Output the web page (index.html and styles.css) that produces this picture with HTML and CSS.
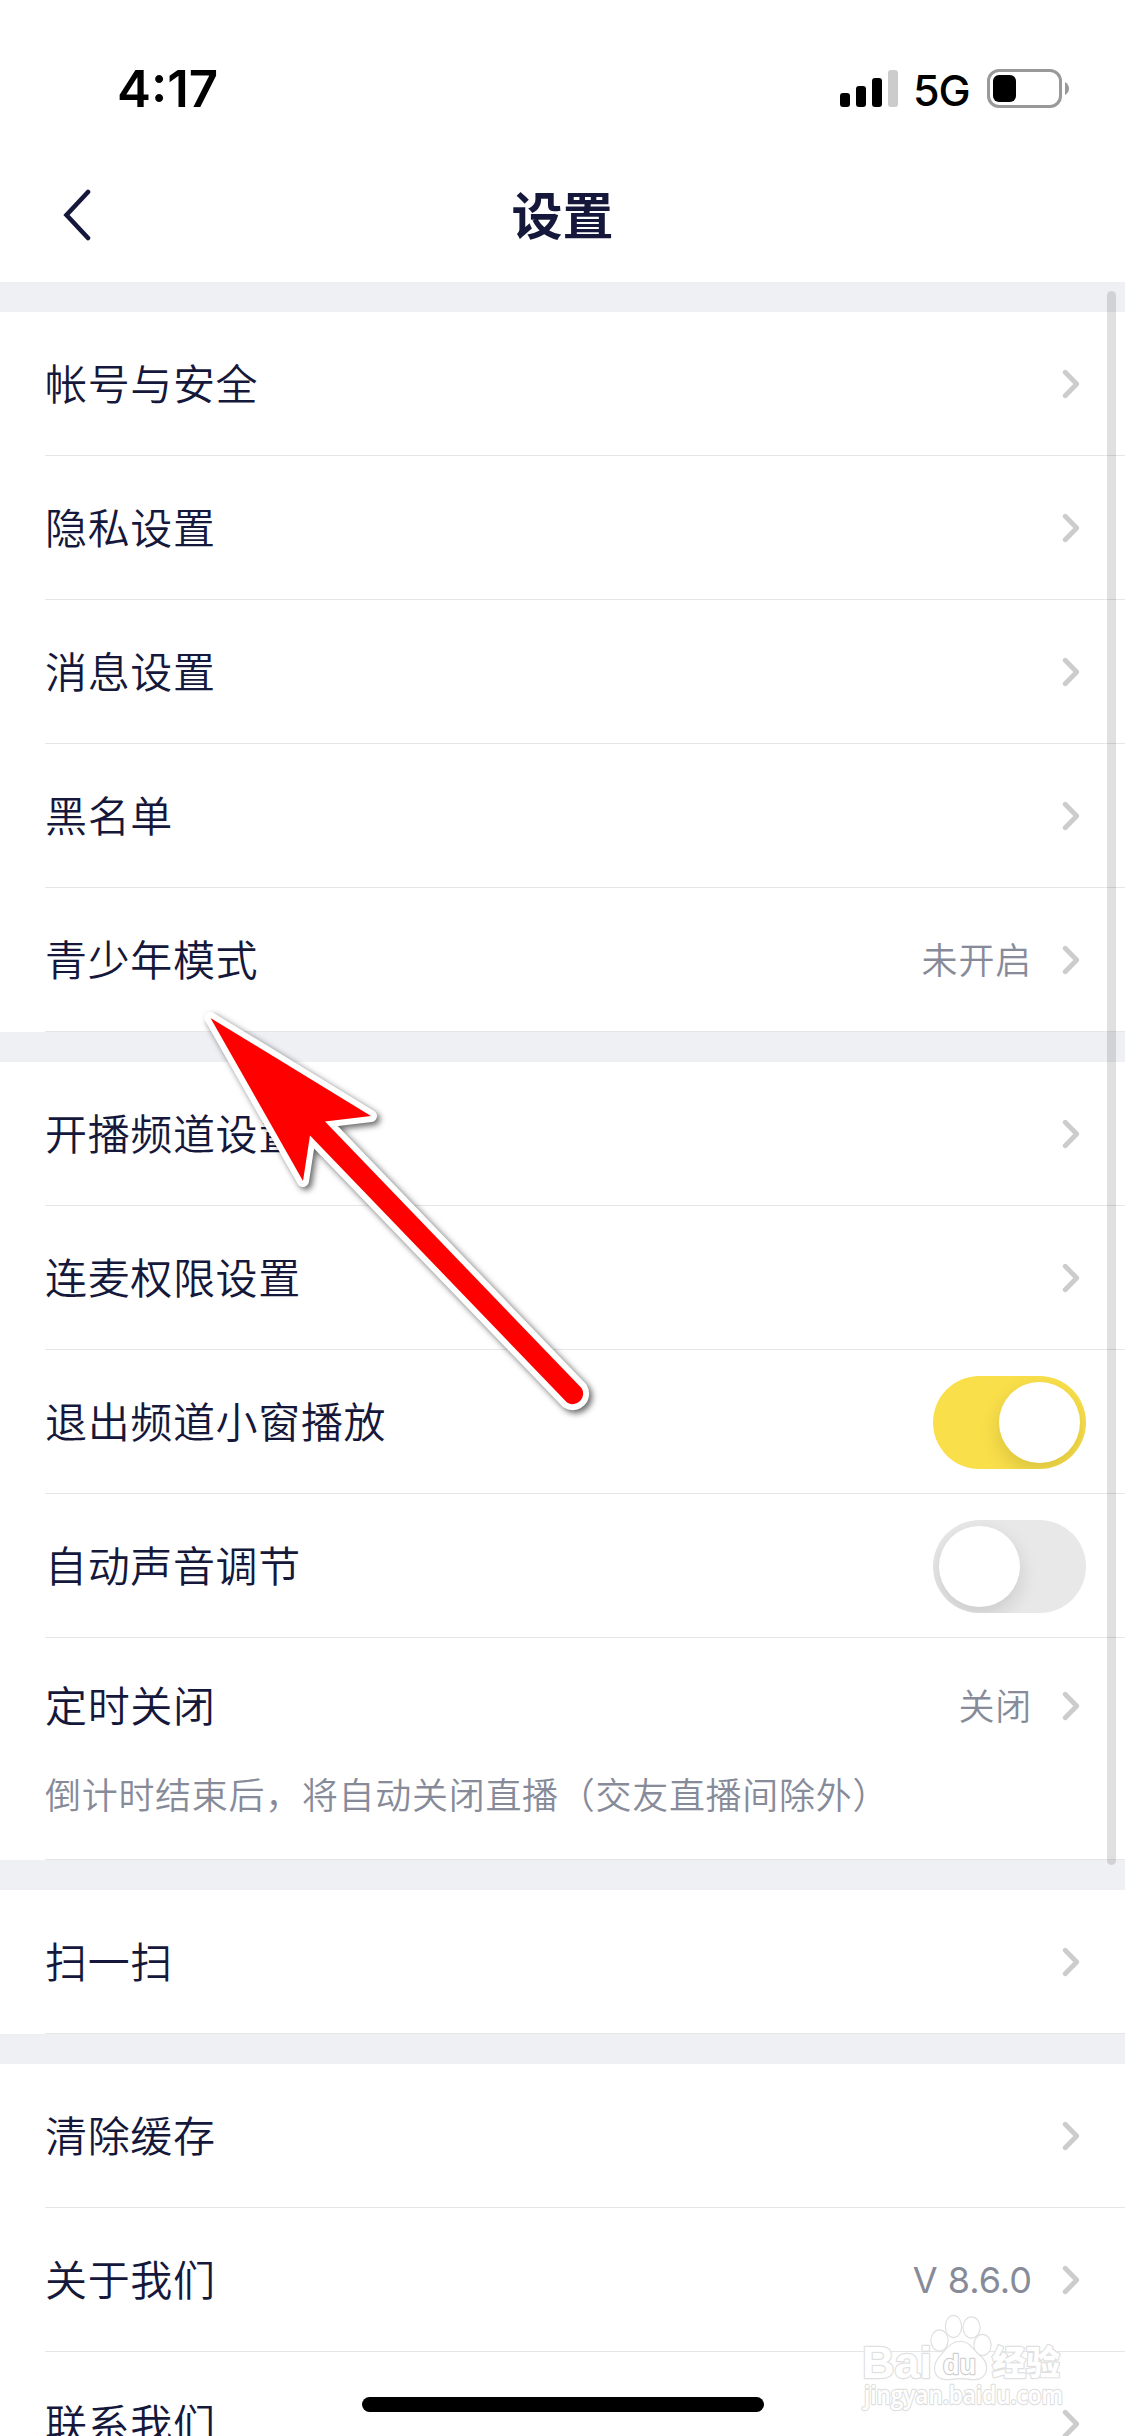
FILE: index.html
```html
<!DOCTYPE html>
<html lang="zh-CN">
<head>
<meta charset="utf-8">
<title>设置</title>
<link rel="stylesheet" href="styles.css">
</head>
<body>
<svg class="defs" aria-hidden="true">
  <symbol id="chevron" viewBox="0 0 18 30"><path d="M3.200 3.200 14.700 15 3.200 26.800" fill="none" stroke="#ccc" stroke-width="4.800" stroke-linecap="round" stroke-linejoin="round"/></symbol>
</svg>
<div class="screen">
  <header class="status">
    <span class="time">4:17</span>
    <span class="indicators">
      <svg class="signal" viewBox="0 0 58 37"><rect y="23" width="10" height="14" rx="3"/><rect x="16" y="16" width="10" height="21" rx="3"/><rect x="32" y="8" width="10" height="29" rx="3"/><rect x="48" width="10" height="37" rx="3" fill="#ccc"/></svg>
      <span class="network">5G</span>
      <svg class="battery" viewBox="0 0 82 39"><rect x="1.500" y="1.500" width="72" height="36" rx="10.500" fill="none" stroke="#999" stroke-width="3"/><rect x="6" y="6" width="23" height="27" rx="6"/><path d="M78 13q4 2.500 4 6.500t-4 6.500z" fill="#999"/></svg>
    </span>
  </header>
  <nav class="titlebar">
    <svg class="back" viewBox="0 0 30 52"><path d="M26 3 4.500 26 26 49" fill="none" stroke="#15183a" stroke-width="4.600" stroke-linecap="round" stroke-linejoin="miter"/></svg>
    <h1>设置</h1>
  </nav>
  <main>
    <section class="group">
      <div class="row"><span class="label">帐号与安全</span><svg class="chev"><use href="#chevron"/></svg></div>
      <div class="row"><span class="label">隐私设置</span><svg class="chev"><use href="#chevron"/></svg></div>
      <div class="row"><span class="label">消息设置</span><svg class="chev"><use href="#chevron"/></svg></div>
      <div class="row"><span class="label">黑名单</span><svg class="chev"><use href="#chevron"/></svg></div>
      <div class="row"><span class="label">青少年模式</span><span class="value">未开启</span><svg class="chev"><use href="#chevron"/></svg></div>
    </section>
    <section class="group">
      <div class="row"><span class="label">开播频道设置</span><svg class="chev"><use href="#chevron"/></svg></div>
      <div class="row"><span class="label">连麦权限设置</span><svg class="chev"><use href="#chevron"/></svg></div>
      <div class="row has-toggle"><span class="label">退出频道小窗播放</span><span class="toggle on"><i class="knob"></i></span></div>
      <div class="row has-toggle"><span class="label">自动声音调节</span><span class="toggle"><i class="knob"></i></span></div>
      <div class="row timer">
        <div class="line"><span class="label">定时关闭</span><span class="value">关闭</span><svg class="chev"><use href="#chevron"/></svg></div>
        <p class="note">倒计时结束后，将自动关闭直播（交友直播间除外）</p>
      </div>
    </section>
    <section class="group">
      <div class="row"><span class="label">扫一扫</span><svg class="chev"><use href="#chevron"/></svg></div>
    </section>
    <section class="group">
      <div class="row"><span class="label">清除缓存</span><svg class="chev"><use href="#chevron"/></svg></div>
      <div class="row"><span class="label">关于我们</span><span class="value version">V 8.6.0</span><svg class="chev"><use href="#chevron"/></svg></div>
      <div class="row"><span class="label">联系我们</span><svg class="chev"><use href="#chevron"/></svg></div>
    </section>
  </main>

  <div class="scrollbar"></div>
  <div class="home"></div>

  <svg class="arrow" viewBox="180 990 430 440">
    <path d="M210.500 1018 371 1116 325 1121.500 581.500 1388A10.500 10.500 0 0 1 567 1402.500L310 1135.500 303 1181Z" fill="#f00" stroke="#fff" stroke-width="12" stroke-linejoin="round" paint-order="stroke"/>
  </svg>

  <svg class="watermark" viewBox="850 2300 230 136">
    <g fill="#fff" stroke="#e0e0e0" stroke-width="2.400" stroke-linejoin="round" paint-order="stroke">
      <text class="wm-latin" x="862" y="2378" font-size="45" textLength="70" lengthAdjust="spacingAndGlyphs">Bai</text>
      <ellipse cx="939.500" cy="2340.500" rx="8" ry="10"/>
      <ellipse cx="953.500" cy="2326.500" rx="7.500" ry="10.500"/>
      <ellipse cx="971.500" cy="2327.500" rx="8" ry="10"/>
      <ellipse cx="982.500" cy="2345" rx="8" ry="10"/>
      <path d="M960.500 2342c9 0 12 8 18 13 12 9 9 24-4 24-6 0-9-1-14-1s-8 1-14 1c-13 0-15-14-5-24 6-6 9-13 19-13z"/>
      <text class="wm-latin" x="943" y="2373.500" font-size="28" textLength="33" lengthAdjust="spacingAndGlyphs" stroke="#d0d0d0">du</text>
      <text class="wm-cjk" x="992" y="2375" font-size="34">经验</text>
      <text class="wm-url" x="864" y="2404" font-size="25" textLength="199" lengthAdjust="spacingAndGlyphs">jingyan.baidu.com</text>
    </g>
  </svg>
</div>
</body>
</html>
```
FILE: styles.css
```css
* { box-sizing: border-box; }
body { margin: 0; background: #fff; }
.defs { display: none; }

.screen {
  position: relative;
  width: 1125px;
  height: 2436px;
  overflow: hidden;
  background: #fff;
  color: #15183a;
  font-family: "Noto Sans CJK SC", sans-serif;
  font-weight: 350;
}

.status {
  display: flex;
  justify-content: space-between;
  height: 150px;
  padding: 69px 56px 0 117px;
  color: #000;
  font-family: Inter, sans-serif;
}
.time { font-size: 51px; line-height: 40px; font-weight: 600; }
.indicators { display: flex; align-items: flex-start; }
.signal { width: 58px; height: 37px; margin-top: 1px; }
.network { width: 74px; margin-left: 15px; font-size: 43px; line-height: 43px; font-weight: 450; letter-spacing: -1px; }
.battery { width: 82px; height: 39px; }

.titlebar {
  display: grid;
  grid-template-columns: 110px 1fr 110px;
  align-items: center;
  height: 132px;
  padding-bottom: 2px;
}
.back { width: 30px; height: 52px; margin-left: 62px; }
h1 { margin: 0; padding-bottom: 5px; font-size: 51px; line-height: 72px; font-weight: 600; text-align: center; }

.group { border-top: 30px solid #eff0f4; }
.row {
  display: flex;
  align-items: center;
  height: 144px;
  padding-right: 45px;
  margin-left: 45px;
  box-shadow: inset 0 -1px #e6e6e6;
}
.row.has-toggle { padding-right: 39px; }
.label { flex: 1; padding-bottom: 4px; font-size: 42px; line-height: 60px; letter-spacing: .65px; }
.value { padding-bottom: 4px; font-size: 36px; line-height: 52px; letter-spacing: .8px; color: #878b99; }
.version { padding-bottom: 0; font-family: Inter, sans-serif; font-weight: 400; letter-spacing: 0; }
.chev { width: 18px; height: 30px; margin-left: 30px; }

.timer { display: block; height: 222px; padding-top: 38px; }
.line { display: flex; align-items: center; height: 60px; }
.note { margin: 31px 0 0; font-size: 36px; line-height: 52px; letter-spacing: .7px; color: #878b99; }

.toggle { width: 153px; height: 93px; padding: 6px; border-radius: 47px; background: #e8e8e8; overflow: hidden; }
.toggle.on { background: #f9df4a; }
.knob { display: block; width: 81px; height: 81px; border-radius: 50%; background: #fff; box-shadow: 0 8px 20px rgba(0, 0, 0, .13); }
.on .knob { margin-left: auto; }

.scrollbar { position: absolute; left: 1107px; top: 291px; width: 9px; height: 1574px; border-radius: 5px; background: rgba(0, 0, 0, .12); }
.home { position: absolute; left: 362px; top: 2397px; width: 402px; height: 15px; border-radius: 8px; background: #000; }
.arrow { position: absolute; left: 180px; top: 990px; width: 430px; height: 440px; filter: drop-shadow(3px 3px 3px rgba(0, 0, 0, .6)); }
.watermark { position: absolute; left: 850px; top: 2300px; width: 230px; height: 136px; overflow: visible; }
.wm-latin { font-family: "Liberation Sans", sans-serif; font-weight: 700; }
.wm-cjk { font-family: "Noto Sans CJK SC", sans-serif; font-weight: 900; }
.wm-url { font-family: "Open Sans", sans-serif; font-weight: 600; }
```
